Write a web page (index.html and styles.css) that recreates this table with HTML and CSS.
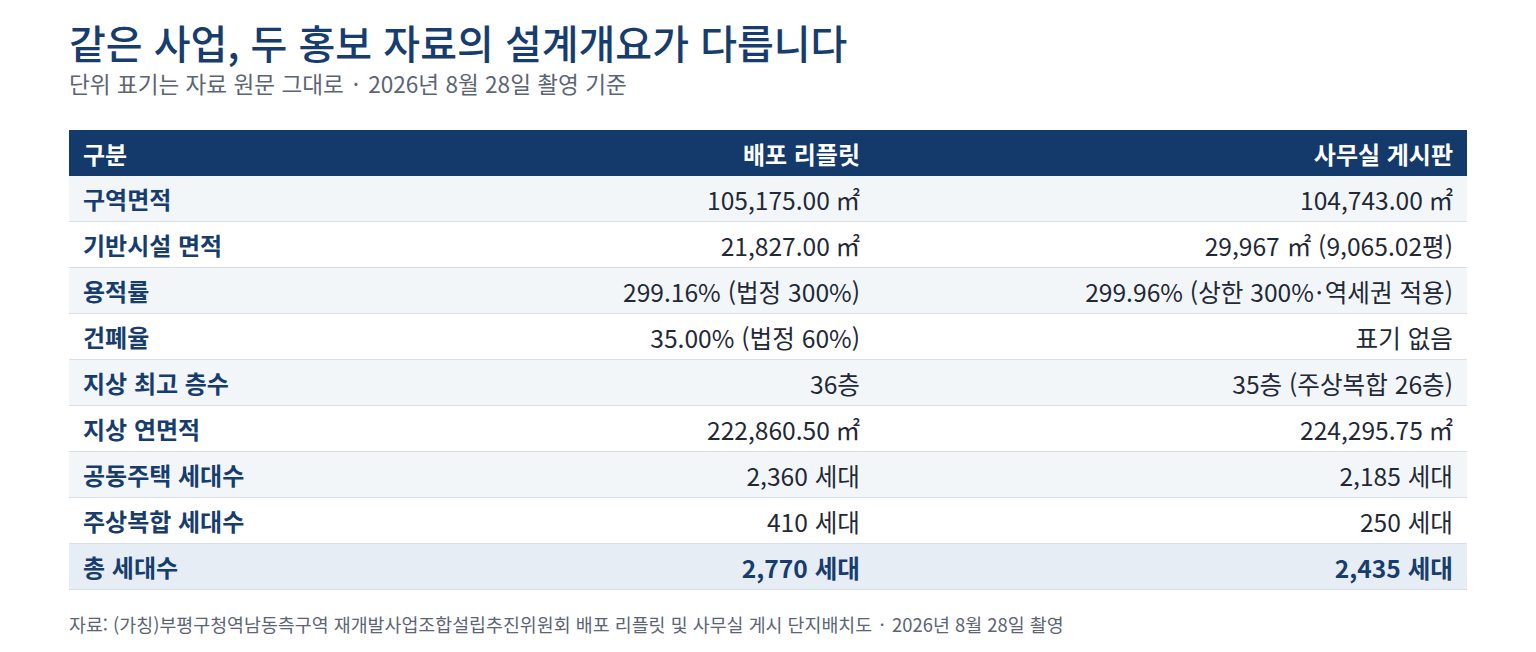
FILE: index.html
```html
<!DOCTYPE html>
<html lang="ko">
<head>
<meta charset="utf-8">
<link rel="stylesheet" href="styles.css">
</head>
<body>
<div class="page">
  <h1 class="title">같은 사업, 두 홍보 자료의 설계개요가 다릅니다</h1>
  <p class="subtitle">단위 표기는 자료 원문 그대로<span class="sep">·</span>2026년 8월 28일 촬영 기준</p>
  <table class="cmp">
    <colgroup><col class="c1"><col class="c2"><col class="c3"></colgroup>
    <thead>
      <tr><th class="lbl">구분</th><th>배포 리플릿</th><th>사무실 게시판</th></tr>
    </thead>
    <tbody>
      <tr><td class="lbl">구역면적</td><td>105,175.00 ㎡</td><td>104,743.00 ㎡</td></tr>
      <tr><td class="lbl">기반시설 면적</td><td>21,827.00 ㎡</td><td>29,967 ㎡ (9,065.02평)</td></tr>
      <tr><td class="lbl">용적률</td><td>299.16% (법정 300%)</td><td>299.96% (상한 300%<span class="dot">·</span>역세권 적용)</td></tr>
      <tr><td class="lbl">건폐율</td><td>35.00% (법정 60%)</td><td>표기 없음</td></tr>
      <tr><td class="lbl">지상 최고 층수</td><td>36층</td><td>35층 (주상복합 26층)</td></tr>
      <tr><td class="lbl">지상 연면적</td><td>222,860.50 ㎡</td><td>224,295.75 ㎡</td></tr>
      <tr><td class="lbl">공동주택 세대수</td><td>2,360 세대</td><td>2,185 세대</td></tr>
      <tr><td class="lbl">주상복합 세대수</td><td>410 세대</td><td>250 세대</td></tr>
      <tr class="total"><td class="lbl">총 세대수</td><td>2,770 세대</td><td>2,435 세대</td></tr>
    </tbody>
  </table>
  <p class="source">자료: (가칭)부평구청역남동측구역 재개발사업조합설립추진위원회 배포 리플릿 및 사무실 게시 단지배치도<span class="sep">·</span>2026년 8월 28일 촬영</p>
</div>
</body>
</html>
```

FILE: styles.css
```css
html, body {
  margin: 0;
  padding: 0;
  background: #ffffff;
}
body {
  font-family: "Noto Sans CJK KR", "Noto Sans", sans-serif;
  color: #1f2937;
}
.page {
  padding: 16px 69px 0 69px;
}
.title {
  margin: 0;
  font-size: 40px;
  font-weight: 500;
  line-height: 52px;
  color: #173d6e;
}
.subtitle {
  margin: 0;
  font-size: 22.6px;
  line-height: 32px;
  color: #5b6575;
}
.sep {
  display: inline-block;
  margin: 0 0.4em;
}
.dot {
  margin: 0 0.08em;
}
.cmp {
  margin-top: 30px;
  width: 1398px;
  border-collapse: collapse;
  table-layout: fixed;
  font-size: 24.6px;
}
.c1 { width: 212px; }
.c2 { width: 593px; }
.c3 { width: 593px; }
.cmp th, .cmp td {
  height: 45px;
  padding: 0 14px;
  text-align: right;
  white-space: nowrap;
}
.cmp th {
  background: #143a6b;
  color: #ffffff;
  font-weight: 700;
  font-size: 24px;
  height: 46px;
}
.cmp td {
  border-bottom: 1px solid #d9dfe8;
  color: #1f2937;
}
.cmp .lbl {
  text-align: left;
}
.cmp td.lbl {
  font-weight: 700;
  font-size: 24px;
  color: #173d6e;
}
.cmp tbody tr:nth-child(odd) td {
  background: #f3f6f9;
}
.cmp tbody tr:nth-child(even) td {
  background: #ffffff;
}
.cmp tbody tr.total td {
  background: #e6edf5;
  font-weight: 700;
  color: #173d6e;
}
.source {
  margin: 21px 0 0 0;
  font-size: 18.4px;
  line-height: 26px;
  color: #5b6575;
}
```
